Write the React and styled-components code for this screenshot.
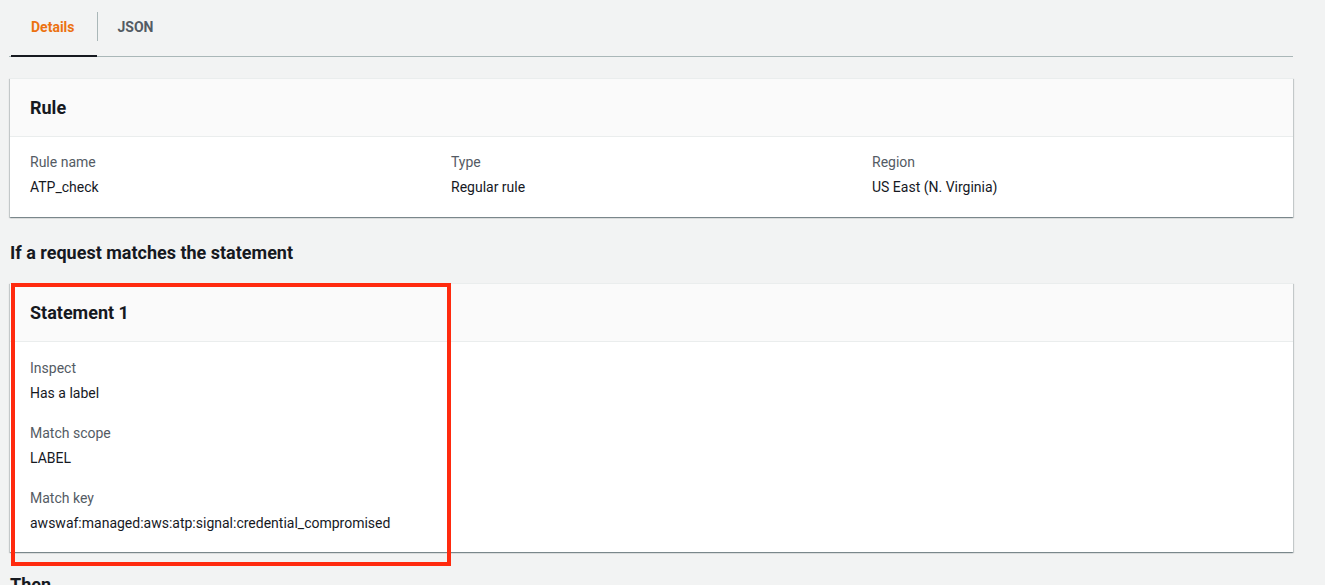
import React from "react";
import styled, { createGlobalStyle } from "styled-components";

const Global = createGlobalStyle`
  html, body { margin: 0; padding: 0; background: #f2f3f3; }
  body { font-family: Roboto, "Noto Sans", Arial, sans-serif; color: #16191f; }
`;

const Page = styled.div`
  padding: 4px 32px 0 10px;
  display: flex;
  flex-direction: column;
`;

const TabBar = styled.div`
  display: flex;
  align-items: stretch;
  border-bottom: 1px solid #aab7b8;
  margin-left: -1px;
  padding-left: 2px;
  height: 52px;
`;

const Tab = styled.div`
  display: flex;
  align-items: center;
  padding: 0 ${(p) => (p.$active ? "22px" : "20px")} 5px 20px;
  font-size: 14px;
  font-weight: 700;
  color: ${(p) => (p.$active ? "#ec7211" : "#545b64")};
  border-bottom: 2px solid ${(p) => (p.$active ? "#16191f" : "transparent")};
  margin-bottom: -1px;
`;

const TabDivider = styled.div`
  width: 1px;
  background: #aab7b8;
  margin: 8px 0 15px;
`;

const Card = styled.section`
  background: #fff;
  border-top: 1px solid #eaeded;
  box-shadow: 0 1px 1px 0 rgba(0, 28, 36, 0.3), 1px 1px 1px 0 rgba(0, 28, 36, 0.15),
    -1px 1px 1px 0 rgba(0, 28, 36, 0.15);
  margin-top: ${(p) => p.$mt || 0}px;
`;

const CardHeader = styled.header`
  background: #fafafa;
  border-bottom: 1px solid #eaeded;
  height: 57px;
  display: flex;
  align-items: center;
  padding: 0 20px;
  font-size: 18px;
  font-weight: 700;
  color: #16191f;
`;

const Columns = styled.div`
  display: grid;
  grid-template-columns: 421px 421px 1fr;
  padding: 13px 20px 17px;
`;

const Stack = styled.div`
  display: flex;
  flex-direction: column;
  gap: 15px;
  padding: 14px 20px 16px;
  width: 420px;
`;

const Field = styled.div`
  display: flex;
  flex-direction: column;
`;

const Label = styled.div`
  font-size: 14px;
  line-height: 25px;
  color: #545b64;
`;

const Value = styled.div`
  font-size: 14px;
  line-height: 25px;
  color: #16191f;
`;

const SectionTitle = styled.h2`
  margin: 0;
  font-size: 18px;
  font-weight: 700;
  color: #16191f;
  line-height: 24px;
  margin-top: ${(p) => p.$mt || 0}px;
`;

const Highlight = styled.div`
  position: relative;
  margin-top: 18px;
`;

const RedBox = styled.div`
  position: absolute;
  left: 1px;
  top: 0;
  width: 432px;
  height: 275px;
  border: 4px solid #ff2a0e;
  pointer-events: none;
`;

const FieldItem = ({ label, value }) => (
  <Field>
    <Label>{label}</Label>
    <Value>{value}</Value>
  </Field>
);

export default function App() {
  return (
    <>
      <Global />
      <Page>
        <TabBar>
          <Tab $active>Details</Tab>
          <TabDivider />
          <Tab>JSON</Tab>
        </TabBar>

        <Card $mt={21}>
          <CardHeader>Rule</CardHeader>
          <Columns>
            <FieldItem label="Rule name" value="ATP_check" />
            <FieldItem label="Type" value="Regular rule" />
            <FieldItem label="Region" value="US East (N. Virginia)" />
          </Columns>
        </Card>

        <SectionTitle $mt={24}>If a request matches the statement</SectionTitle>

        <Highlight>
          <Card>
            <CardHeader>Statement 1</CardHeader>
            <Stack>
              <FieldItem label="Inspect" value="Has a label" />
              <FieldItem label="Match scope" value="LABEL" />
              <FieldItem
                label="Match key"
                value="awswaf:managed:aws:atp:signal:credential_compromised"
              />
            </Stack>
          </Card>
          <RedBox />
        </Highlight>

        <SectionTitle $mt={21}>Then</SectionTitle>
      </Page>
    </>
  );
}
